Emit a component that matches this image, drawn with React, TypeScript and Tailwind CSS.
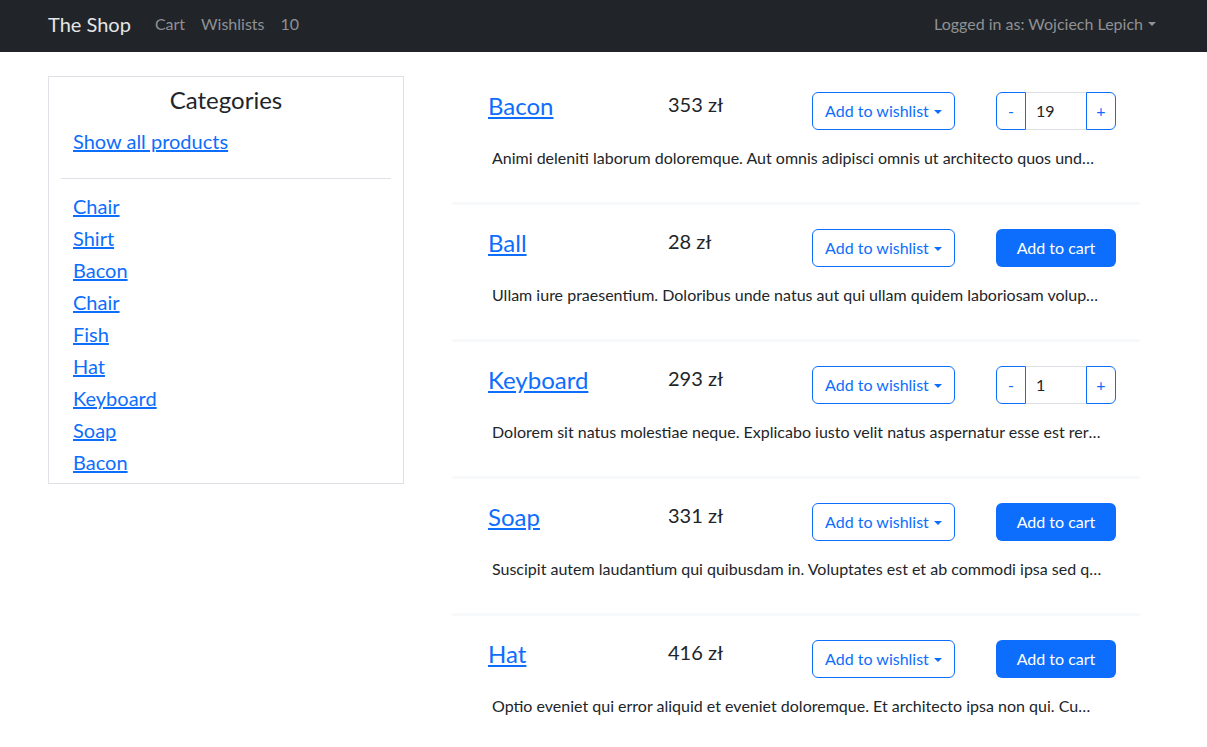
type Product = {
  name: string;
  price: string;
  desc: string;
  qty?: number;
};

const products: Product[] = [
  { name: "Bacon", price: "353 zł", desc: "Animi deleniti laborum doloremque. Aut omnis adipisci omnis ut architecto quos unde voluptatem et.", qty: 19 },
  { name: "Ball", price: "28 zł", desc: "Ullam iure praesentium. Doloribus unde natus aut qui ullam quidem laboriosam voluptatem." },
  { name: "Keyboard", price: "293 zł", desc: "Dolorem sit natus molestiae neque. Explicabo iusto velit natus aspernatur esse est rerum.", qty: 1 },
  { name: "Soap", price: "331 zł", desc: "Suscipit autem laudantium qui quibusdam in. Voluptates est et ab commodi ipsa sed quia." },
  { name: "Hat", price: "416 zł", desc: "Optio eveniet qui error aliquid et eveniet doloremque. Et architecto ipsa non qui. Cum sit." },
];

const categories = ["Chair", "Shirt", "Bacon", "Chair", "Fish", "Hat", "Keyboard", "Soap", "Bacon"];

function Caret({ className = "" }: { className?: string }) {
  return (
    <span
      className={`inline-block w-0 h-0 border-l-[4.8px] border-r-[4.8px] border-t-[4.8px] border-l-transparent border-r-transparent align-middle ${className}`}
    />
  );
}

function ProductRow({ p }: { p: Product }) {
  return (
    <div className="h-[137px] border-b-[3px] border-[#f8f9fa]">
      <div className="flex pl-[36px] pt-[24px] h-[62px]">
        <div className="w-[180px] -mt-[1px]">
          <a href="#" className="block text-[24px] leading-[29px] text-[#0d6efd] underline">
            {p.name}
          </a>
        </div>
        <div className="w-[144px]">
          <span className="block text-[20px] leading-[24px] text-[#212529]">{p.price}</span>
        </div>
        <div className="w-[184px]">
          <button className="h-[38px] w-[143px] border border-[#0d6efd] text-[#0d6efd] rounded-[6px] text-[16px] flex items-center justify-center gap-[5px]">
            Add to wishlist
            <Caret className="border-t-[#0d6efd] mt-[1px]" />
          </button>
        </div>
        <div className="w-[120px]">
          {p.qty !== undefined ? (
            <div className="flex h-[38px]">
              <button className="w-[30px] h-[38px] border border-[#0d6efd] text-[#0d6efd] rounded-l-[6px] text-[16px]">-</button>
              <div className="w-[60px] h-[38px] border-y border-[#dee2e6] flex items-center pl-[10px] text-[16px] text-[#212529]">
                {p.qty}
              </div>
              <button className="w-[30px] h-[38px] border border-[#0d6efd] text-[#0d6efd] rounded-r-[6px] text-[16px]">+</button>
            </div>
          ) : (
            <button className="w-[120px] h-[38px] bg-[#0d6efd] text-white rounded-[6px] text-[16px]">Add to cart</button>
          )}
        </div>
      </div>
      <div className="pl-[40px] pt-[16px]">
        <p className="w-[610px] truncate text-[16px] leading-[24px] text-[#212529]">{p.desc}</p>
      </div>
    </div>
  );
}

export default function App() {
  return (
    <div className="min-h-[747px] bg-white" style={{ fontFamily: "Lato, 'Noto Sans', sans-serif" }}>
      <nav className="h-[52px] bg-[#212529] flex items-center pl-[48px] pr-[51px] pb-[5px]">
        <span className="text-[20px] leading-[30px] text-[#e5e5e6] mr-[16px]">The Shop</span>
        <a href="#" className="px-[8px] text-[16px] leading-[24px] text-[#8f9194]">Cart</a>
        <a href="#" className="px-[8px] text-[16px] leading-[24px] text-[#8f9194]">Wishlists</a>
        <span className="px-[8px] text-[16px] leading-[24px] text-[#8f9194]">10</span>
        <div className="ml-auto flex items-center gap-[5px] text-[16px] leading-[24px] text-[#8f9194]">
          Logged in as: Wojciech Lepich
          <Caret className="border-t-[#8f9194] mt-[1px]" />
        </div>
      </nav>
      <div className="flex items-start pl-[48px]">
        <aside className="mt-[24px] w-[356px] border border-[#dee2e6] px-[12px] pt-[8px] pb-[5px]">
          <h2 className="text-center text-[24px] leading-[29px] text-[#212529]">Categories</h2>
          <div className="pl-[12px] pt-[12px] pb-[22px]">
            <a href="#" className="text-[20px] leading-[30px] text-[#0d6efd] underline">Show all products</a>
          </div>
          <hr className="border-t border-[#dee2e6]" />
          <ul className="pl-[12px] pt-[11px]">
            {categories.map((c, i) => (
              <li key={i} className="text-[20px] leading-[32px]">
                <a href="#" className="text-[#0d6efd] underline">{c}</a>
              </li>
            ))}
          </ul>
        </aside>
        <main className="ml-[48px] w-[688px] mt-[16px]">
          {products.map((p, i) => (
            <ProductRow key={i} p={p} />
          ))}
        </main>
      </div>
    </div>
  );
}
